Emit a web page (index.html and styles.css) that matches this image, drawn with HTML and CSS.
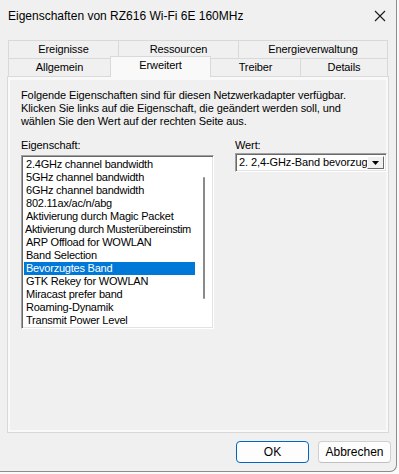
FILE: index.html
```html
<!DOCTYPE html>
<html lang="de">
<head>
<meta charset="utf-8">
<title>Eigenschaften von RZ616 Wi-Fi 6E 160MHz</title>
<link rel="stylesheet" href="styles.css">
</head>
<body>
<div class="window">
  <div class="titlebar">
    <span class="title">Eigenschaften von RZ616 Wi-Fi 6E 160MHz</span>
    <svg class="close" width="12" height="12" viewBox="0 0 12 12"><path d="M1 1 L11 11 M11 1 L1 11" stroke="#1a1a1a" stroke-width="1.1" fill="none"/></svg>
  </div>
  <div class="body">
    <div class="tabs">
      <div class="tabrow">
        <div class="tab w110">Ereignisse</div>
        <div class="tab w120">Ressourcen</div>
        <div class="tab w150">Energieverwaltung</div>
      </div>
      <div class="tabrow front">
        <div class="tab w102">Allgemein</div>
        <div class="tab w101 selected">Erweitert</div>
        <div class="tab w89">Treiber</div>
        <div class="tab w88">Details</div>
      </div>
    </div>
    <div class="panel">
      <div class="page">
        <p class="desc">Folgende Eigenschaften sind für diesen Netzwerkadapter verfügbar.<br>Klicken Sie links auf die Eigenschaft, die geändert werden soll, und<br>wählen Sie den Wert auf der rechten Seite aus.</p>
        <div class="cols">
          <div class="col-left">
            <div class="label">Eigenschaft:</div>
            <div class="listbox">
              <ul class="items">
                <li>2.4GHz channel bandwidth</li>
                <li>5GHz channel bandwidth</li>
                <li>6GHz channel bandwidth</li>
                <li>802.11ax/ac/n/abg</li>
                <li>Aktivierung durch Magic Packet</li>
                <li class="tight">Aktivierung durch Musterübereinstim</li>
                <li>ARP Offload for WOWLAN</li>
                <li>Band Selection</li>
                <li class="sel">Bevorzugtes Band</li>
                <li>GTK Rekey for WOWLAN</li>
                <li>Miracast prefer band</li>
                <li>Roaming-Dynamik</li>
                <li>Transmit Power Level</li>
              </ul>
              <div class="scroll"><div class="thumb"></div></div>
            </div>
          </div>
          <div class="col-right">
            <div class="label">Wert:</div>
            <div class="combo">
              <span class="combo-text">2. 2,4-GHz-Band bevorzug</span>
              <span class="combo-btn"><svg width="7" height="4" viewBox="0 0 7 4"><path d="M0 0 H7 L3.5 4 Z" fill="#000"/></svg></span>
            </div>
          </div>
        </div>
      </div>
    </div>
    <div class="buttons">
      <button class="btn default">OK</button>
      <button class="btn">Abbrechen</button>
    </div>
  </div>
</div>
</body>
</html>
```
FILE: styles.css
```css
* { box-sizing: border-box; }
html, body { margin: 0; padding: 0; background: #fafafa; }
body { width: 399px; height: 474px; overflow: hidden; font-family: "Liberation Sans", Arial, sans-serif; font-size: 11px; color: #000; }

.window {
  width: 397px;
  height: 472px;
  background: #f0f0f0;
  border-right: 1px solid #8c8c8c;
  border-bottom: 1px solid #8c8c8c;
  border-bottom-right-radius: 7px;
  display: flex;
  flex-direction: column;
}

.titlebar {
  height: 30px;
  display: flex;
  align-items: center;
  justify-content: space-between;
  padding: 0 10px 0 8px;
  background: #f0f0f0;
}
.title { font-size: 12px; color: #000; padding-top: 1px; }
.close { margin-top: 1px; }

.body { padding: 10px 0 0 8px; display: flex; flex-direction: column; }

.tabs { display: flex; flex-direction: column; width: 380px; }
.tabrow { display: flex; height: 18px; }
.tab {
  border: 1px solid #d9d9d9;
  border-right: none;
  border-bottom: none;
  background: #f0f0f0;
  text-align: center;
  line-height: 17px;
  color: #000;
  letter-spacing: -0.1px;
}
.tabrow .tab:last-child { border-right: 1px solid #d9d9d9; }
.w110 { width: 110px; } .w120 { width: 120px; } .w150 { width: 150px; }
.w102 { width: 102px; } .w101 { width: 101px; } .w89 { width: 89px; } .w88 { width: 88px; }
.tab.selected {
  position: relative;
  z-index: 2;
  margin-top: -2px;
  height: 21px;
  background: #f9f9f9;
  border-right: 1px solid #d9d9d9;
  line-height: 17px;
}
.tab.selected + .tab { border-left: none; }

.panel {
  width: 382px;
  height: 357px;
  margin-left: -1px;
  border: 1px solid #d9d9d9;
  background: #f9f9f9;
  padding: 3px 2px 2px 2px;
}
.page { background: #f0f0f0; height: 100%; padding: 9px 0 0 11px; letter-spacing: -0.1px; }
.desc { margin: 0; line-height: 13px; }

.cols { display: flex; margin-top: 11px; }
.col-left { width: 193px; }
.col-right { margin-left: 21px; }
.label { line-height: 13px; height: 13px; }
.col-left .label { margin-bottom: 3px; }
.col-right .label { margin-bottom: 1px; }

.listbox {
  width: 193px;
  height: 174px;
  background: #fff;
  border-top: 1px solid #a0a0a0;
  border-left: 1px solid #a0a0a0;
  border-right: 1px solid #fff;
  border-bottom: 1px solid #fff;
  box-shadow: inset 1px 1px 0 #696969, inset -1px -1px 0 #e3e3e3;
  padding: 2px 2px 1px 2px;
  display: flex;
  overflow: hidden;
}
.items { list-style: none; margin: 0; padding: 0; width: 173px; overflow: hidden; letter-spacing: -0.22px; }
.items li { height: 13px; line-height: 13px; padding-left: 2px; white-space: nowrap; overflow: hidden; }
.items li.tight { letter-spacing: -0.36px; padding-left: 1px; }
.items li.sel { background: #0078d7; color: #fff; }
.scroll { width: 16px; display: flex; justify-content: center; padding-top: 19px; }
.thumb { width: 2px; height: 122px; background: #8a8a8a; border-radius: 1px; margin-left: 1px; }

.combo {
  width: 152px;
  height: 19px;
  background: #fff;
  border-top: 1px solid #a0a0a0;
  border-left: 1px solid #a0a0a0;
  border-right: 1px solid #fff;
  border-bottom: 1px solid #fff;
  box-shadow: inset 1px 1px 0 #696969, inset -1px -1px 0 #e3e3e3;
  display: flex;
  align-items: stretch;
  padding: 2px 2px 2px 2px;
}
.combo-text { flex: 1; white-space: nowrap; overflow: hidden; line-height: 13px; padding-left: 1px; }
.combo-btn {
  width: 17px;
  background: #f0f0f0;
  border-top: 1px solid #fff;
  border-left: 1px solid #fff;
  border-right: 1px solid #696969;
  border-bottom: 1px solid #696969;
  display: flex;
  align-items: center;
  justify-content: center;
}

.buttons { display: flex; justify-content: flex-end; gap: 9px; padding: 8px 5px 0 0; }
.btn {
  width: 73px;
  height: 22px;
  font-family: "Liberation Sans", Arial, sans-serif;
  font-size: 12px;
  background: #fdfdfd;
  border: 1px solid #d0d0d0;
  border-bottom-color: #c0c0c0;
  border-radius: 4px;
  color: #000;
  padding: 0;
}
.btn.default { border: 1px solid #0067c0; }
```
